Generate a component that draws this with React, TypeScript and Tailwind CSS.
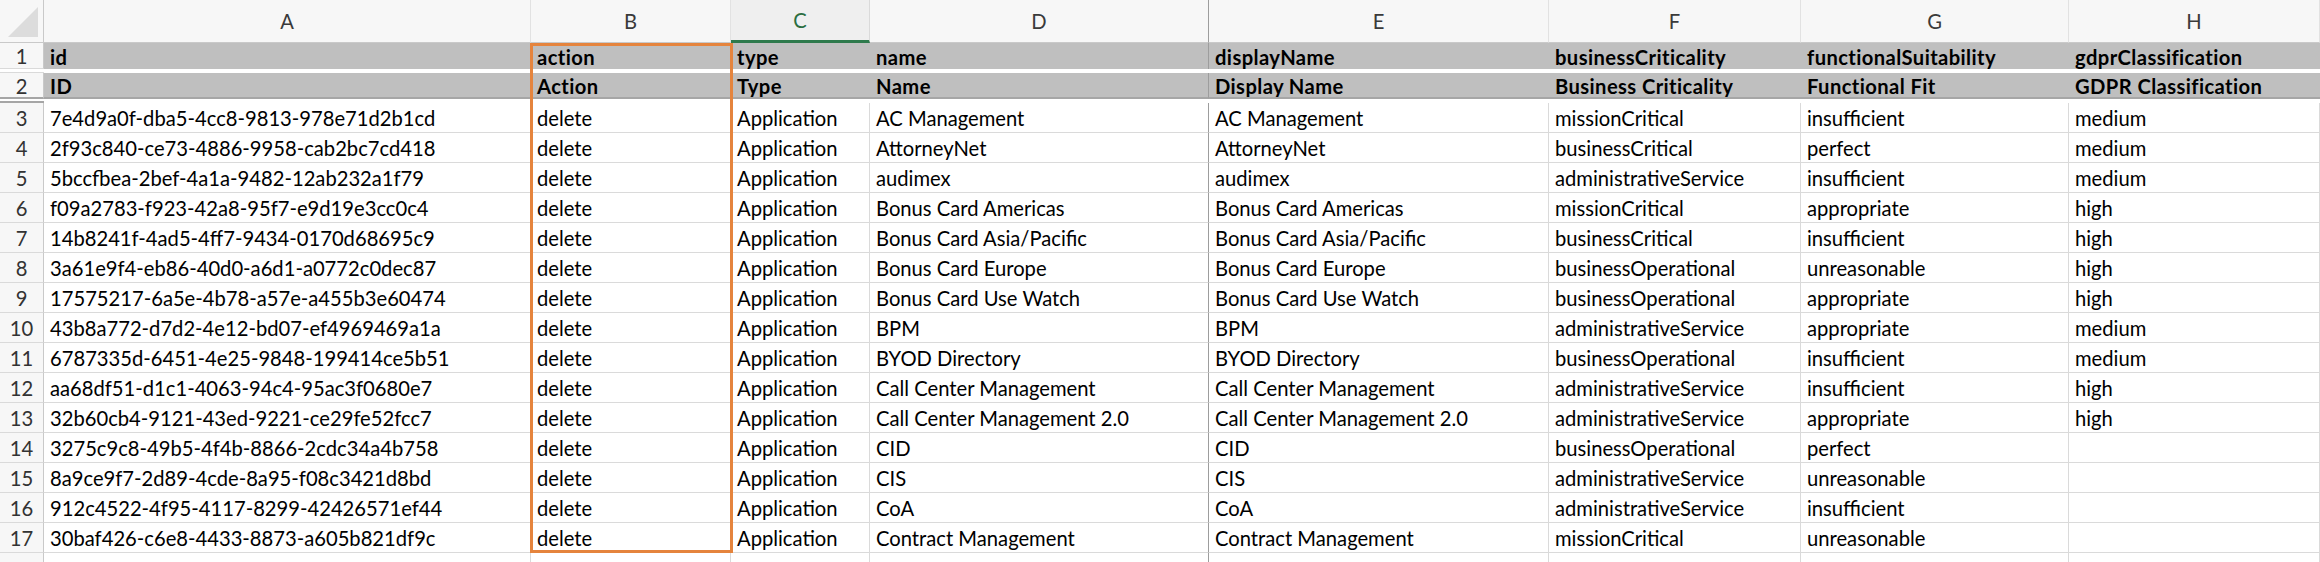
const cols = ["A", "B", "C", "D", "E", "F", "G", "H"];

const headerRows: string[][] = [
	["id", "action", "type", "name", "displayName", "businessCriticality", "functionalSuitability", "gdprClassification"],
	["ID", "Action", "Type", "Name", "Display Name", "Business Criticality", "Functional Fit", "GDPR Classification"],
];

const data: string[][] = [
	["7e4d9a0f-dba5-4cc8-9813-978e71d2b1cd", "AC Management", "missionCritical", "insufficient", "medium"],
	["2f93c840-ce73-4886-9958-cab2bc7cd418", "AttorneyNet", "businessCritical", "perfect", "medium"],
	["5bccfbea-2bef-4a1a-9482-12ab232a1f79", "audimex", "administrativeService", "insufficient", "medium"],
	["f09a2783-f923-42a8-95f7-e9d19e3cc0c4", "Bonus Card Americas", "missionCritical", "appropriate", "high"],
	["14b8241f-4ad5-4ff7-9434-0170d68695c9", "Bonus Card Asia/Pacific", "businessCritical", "insufficient", "high"],
	["3a61e9f4-eb86-40d0-a6d1-a0772c0dec87", "Bonus Card Europe", "businessOperational", "unreasonable", "high"],
	["17575217-6a5e-4b78-a57e-a455b3e60474", "Bonus Card Use Watch", "businessOperational", "appropriate", "high"],
	["43b8a772-d7d2-4e12-bd07-ef4969469a1a", "BPM", "administrativeService", "appropriate", "medium"],
	["6787335d-6451-4e25-9848-199414ce5b51", "BYOD Directory", "businessOperational", "insufficient", "medium"],
	["aa68df51-d1c1-4063-94c4-95ac3f0680e7", "Call Center Management", "administrativeService", "insufficient", "high"],
	["32b60cb4-9121-43ed-9221-ce29fe52fcc7", "Call Center Management 2.0", "administrativeService", "appropriate", "high"],
	["3275c9c8-49b5-4f4b-8866-2cdc34a4b758", "CID", "businessOperational", "perfect", ""],
	["8a9ce9f7-2d89-4cde-8a95-f08c3421d8bd", "CIS", "administrativeService", "unreasonable", ""],
	["912c4522-4f95-4117-8299-42426571ef44", "CoA", "administrativeService", "insufficient", ""],
	["30baf426-c6e8-4433-8873-a605b821df9c", "Contract Management", "missionCritical", "unreasonable", ""],
];

const gridCols = "grid grid-cols-[44px_487px_200px_139px_339px_340px_252px_268px_1fr]";

// column D carries the frozen-pane divider on its right edge
const cellBorder = (i: number) =>
	i === 3 ? "border-r border-r-[#9d9d9d]" : "border-r border-r-[#dadada]";

const ColumnHeader = () => (
	<div className={`${gridCols} h-[43px] bg-[#f7f7f7] text-[#3a3a3a]`}>
		<div className="relative border-r border-b border-[#c9c9c9]">
			<svg className="absolute right-[5px] bottom-[5px]" width="30" height="30" viewBox="0 0 30 30">
				<path d="M30 0 L30 30 L0 30 Z" fill="#dcdcdc" />
			</svg>
		</div>
		{cols.map((c, i) => (
			<div
				key={c}
				className={
					c === "C"
						? `flex items-center justify-center border-b-[3px] border-b-[#2e7a4c] bg-[#efefef] text-[#2b6e41] ${cellBorder(i)}`
						: `flex items-center justify-center border-b border-b-[#c9c9c9] ${i === 3 ? "border-r border-r-[#9d9d9d]" : "border-r border-r-[#e2e2e2]"}`
				}
			>
				{c}
			</div>
		))}
	</div>
);

const RowNumber = ({ n, thick }: { n?: number; thick?: boolean }) => (
	<div
		className={`flex items-center justify-center pt-[2px] bg-[#f7f7f7] border-r border-r-[#c9c9c9] text-[#333] ${
			thick ? "border-b-2 border-b-[#a6a6a6]" : "border-b border-b-[#dadada]"
		}`}
	>
		{n}
	</div>
);

export default function App() {
	return (
		<div className="relative w-[2320px] h-[562px] overflow-hidden bg-white font-['Lato','Open_Sans',sans-serif] text-[20.2px] text-black leading-none">
			<ColumnHeader />

			{headerRows.map((row, r) => (
				<div key={r} className={`${gridCols} h-[30px]`}>
					<RowNumber n={r + 1} thick={r === 1} />
					{row.map((v, i) => (
						<div
							key={i}
							className={`flex items-center px-[6px] pt-[2px] bg-[#bfbfbf] font-bold tracking-[0.4px] whitespace-nowrap overflow-hidden ${
								i === 3 ? "border-r border-r-[#9d9d9d]" : ""
							} ${r === 1 ? "border-b-2 border-b-[#a6a6a6]" : ""}`}
						>
							{v}
						</div>
					))}
					<div className={`bg-white ${r === 1 ? "border-b-2 border-b-[#a6a6a6]" : "border-b border-b-[#dadada]"}`} />
				</div>
			))}

			{data.map((d, r) => {
				const cells = [d[0], "delete", "Application", d[1], d[1], d[2], d[3], d[4]];
				return (
					<div key={r} className={`${gridCols} h-[30px]`}>
						<RowNumber n={r + 3} />
						{cells.map((v, i) => (
							<div
								key={i}
								className={`flex items-center px-[6px] pt-[2px] border-b border-b-[#dadada] whitespace-nowrap overflow-hidden ${cellBorder(i)}`}
							>
								{v}
							</div>
						))}
					</div>
				);
			})}

			<div className={`${gridCols} h-[30px]`}>
				<RowNumber />
				{cols.map((c, i) => (
					<div key={c} className={cellBorder(i)} />
				))}
			</div>

			{/* selection outline around column B */}
			<div className="absolute left-[530px] top-[43px] w-[203px] h-[510px] border-[3px] border-[#e5843d]" />
		</div>
	);
}
